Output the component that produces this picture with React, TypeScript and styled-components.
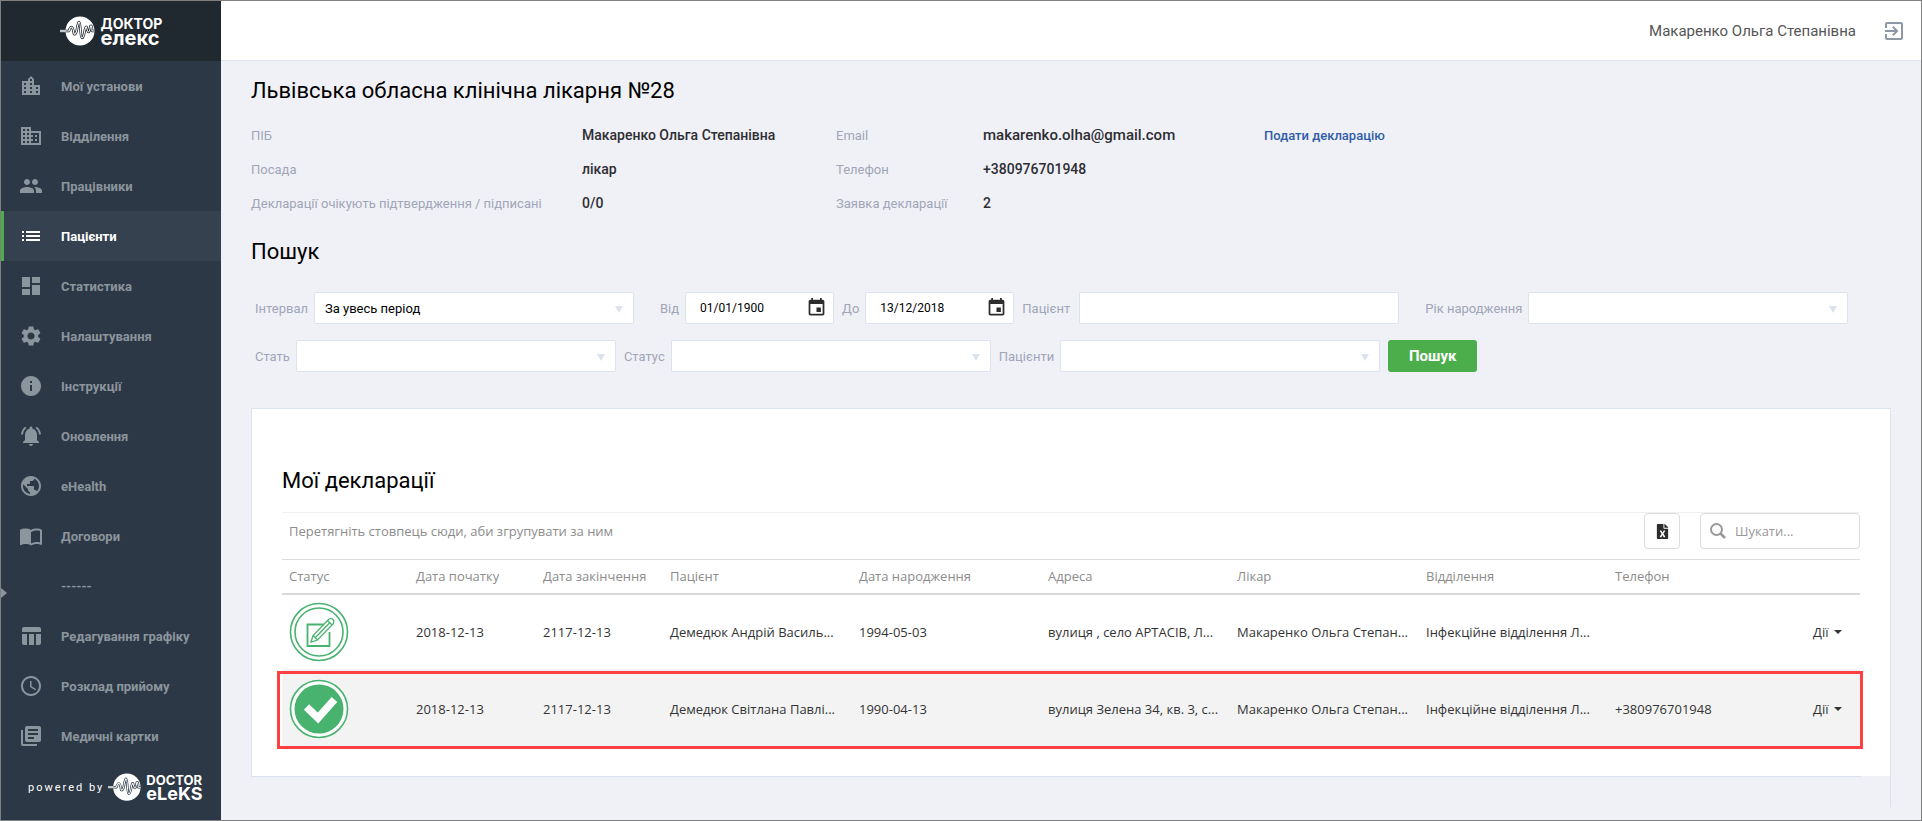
import React from "react";
import styled, { createGlobalStyle } from "styled-components";
import {
  MdLocationCity, MdBusiness, MdPeople, MdList, MdDashboard, MdSettings, MdInfo,
  MdNotificationsActive, MdPublic, MdImportContacts, MdTableChart, MdAccessTime,
  MdLibraryBooks, MdExitToApp, MdEvent,
} from "react-icons/md";
import { FaFileExcel } from "react-icons/fa";

const Global = createGlobalStyle`
  *, *::before, *::after { box-sizing: border-box; }
  body { margin: 0; font-family: Roboto, "Liberation Sans", sans-serif; font-size: 14px; color: #333; }
  h1, h2, ul { margin: 0; padding: 0; font-weight: 400; }
  input, select, button { font-family: inherit; }
`;

const Page = styled.div`
  display: flex;
  min-height: 100vh;
  border: 1px solid #808080;
  background: #f0f1f6;
`;

const Sidebar = styled.aside`
  width: 220px;
  flex: none;
  display: flex;
  flex-direction: column;
  background: #2d3846;
`;

const Brand = styled.a`
  height: 60px;
  display: flex;
  align-items: center;
  justify-content: center;
  gap: 5px;
  background: #202830;
  color: #fff;
  text-decoration: none;
`;

const BrandName = styled.span`
  display: flex;
  flex-direction: column;
  font-family: Inter, Roboto, sans-serif;
  font-weight: 700;
`;

const BrandTop = styled.span<{ $small?: boolean }>`
  font-size: ${(p) => (p.$small ? 13 : 14)}px;
  line-height: 14px;
`;

const BrandBottom = styled.span<{ $small?: boolean }>`
  font-size: ${(p) => (p.$small ? 18 : 20)}px;
  line-height: 14px;
`;

const Menu = styled.ul`
  list-style: none;
`;

const MenuLink = styled.a<{ $active?: boolean }>`
  position: relative;
  display: flex;
  align-items: center;
  gap: 18px;
  height: 50px;
  padding-left: 15px;
  border-left: 3px solid ${(p) => (p.$active ? "#4bae4b" : "transparent")};
  background: ${(p) => (p.$active ? "#36414f" : "transparent")};
  color: ${(p) => (p.$active ? "#fff" : "#8b959d")};
  font-size: 13px;
  font-weight: 700;
  text-decoration: none;

  svg { width: 24px; height: 24px; flex: none; }
`;

const IconSlot = styled.span`
  width: 24px;
`;

const Marker = styled.span`
  position: absolute;
  left: -3px;
  top: 27px;
  width: 6px;
  height: 10px;
  background: #8b959d;
  clip-path: polygon(0 0, 100% 50%, 0 100%);
`;

const Powered = styled.a`
  display: flex;
  align-items: center;
  gap: 4px;
  height: 52px;
  padding-left: 27px;
  color: #fff;
  text-decoration: none;
`;

const PoweredText = styled.span`
  font-size: 11px;
  letter-spacing: 2px;
`;

const Content = styled.div`
  flex: 1;
  min-width: 0;
  display: flex;
  flex-direction: column;
`;

const TopBar = styled.header`
  display: flex;
  align-items: center;
  justify-content: flex-end;
  gap: 26px;
  height: 60px;
  padding: 0 15px;
  background: #fff;
  border-bottom: 1px solid #dde3ee;
  color: #555;
  font-size: 15px;
`;

const IconButton = styled.button`
  display: flex;
  padding: 0;
  border: 0;
  background: none;
  color: #8d98a6;
`;

const Main = styled.main`
  padding: 15px 30px 0;
`;

const Title = styled.h1`
  font-size: 22px;
  line-height: 30px;
  color: #000;
`;

const Details = styled.div`
  display: grid;
  grid-template-columns: 331px 254px 147px 281px auto;
  grid-auto-rows: 34px;
  align-items: center;
  padding: 12px 0 17px;
  justify-content: start;
`;

const Term = styled.span`
  font-size: 13px;
  color: #a0a5b8;
`;

const Value = styled.span<{ $large?: boolean }>`
  font-size: ${(p) => (p.$large ? 15 : 14)}px;
  font-weight: 500;
  color: #2d2d33;
`;

const ActionLink = styled.a`
  font-size: 13px;
  font-weight: 500;
  color: #2f5ca8;
  text-decoration: none;
`;

const SectionTitle = styled.h2`
  font-size: 22px;
  line-height: 30px;
  color: #000;
`;

const SearchForm = styled.form`
  display: flex;
  flex-direction: column;
  gap: 16px;
  padding: 25px 4px 0;
`;

const FormRow = styled.div`
  display: flex;
  align-items: center;
  gap: 8px;
`;

const Field = styled.label<{ $gapAfter?: number; $loose?: boolean }>`
  display: flex;
  align-items: center;
  gap: ${(p) => (p.$loose ? 9 : 6)}px;
  margin-right: ${(p) => p.$gapAfter ?? 0}px;
  font-size: 13px;
  color: #a0a5b8;
`;

const control = `
  height: 32px;
  border: 1px solid #dde3ee;
  border-radius: 2px;
  background-color: #fff;
  color: #000;
`;

const Select = styled.select`
  ${control}
  width: 320px;
  padding: 0 10px;
  font-size: 13px;
  appearance: none;
`;

const SelectBox = styled.span`
  position: relative;
  display: flex;

  &::after {
    content: "";
    position: absolute;
    right: 11px;
    top: 14px;
    border: 4px solid transparent;
    border-top: 7px solid #dde3ee;
    border-bottom: 0;
  }
`;

const TextInput = styled.input`
  ${control}
  width: 320px;
  padding: 0 10px;
  font-size: 13px;
`;

const DateBox = styled.span`
  position: relative;
  display: flex;

  svg {
    position: absolute;
    right: 7px;
    top: 5px;
    width: 21px;
    height: 21px;
    color: #2d2d2d;
  }
`;

const DateInput = styled.input`
  ${control}
  width: 149px;
  padding: 0 14px;
  font-size: 12px;
`;

const SubmitButton = styled.button`
  width: 89px;
  height: 32px;
  border: 0;
  border-radius: 3px;
  background: #4bae4b;
  color: #fff;
  font-size: 15px;
  font-weight: 700;
`;

const Panel = styled.section`
  margin-top: 36px;
  padding-bottom: 30px;
  border-top: 1px solid #dde3ee;
  border-right: 1px solid #dde3ee;
`;

const PanelBody = styled.div`
  padding: 57px 30px 27px;
  background: #fff;
  border-left: 1px solid #dde3ee;
`;

const PanelEdge = styled.div`
  height: 1px;
  margin-right: 29px;
  background: #dde3ee;
`;

const GridTools = styled.div`
  display: flex;
  align-items: flex-start;
  justify-content: space-between;
  height: 47px;
  margin-top: 16px;
  border-top: 1px solid #f0f0f0;
  font-family: "Open Sans", "Noto Sans", sans-serif;
  font-size: 13px;
  color: #8c8c8c;
`;

const GroupHint = styled.span`
  padding: 0 7px;
  line-height: 37px;
`;

const ToolGroup = styled.div`
  display: flex;
  gap: 20px;
`;

const ExportButton = styled.button`
  display: flex;
  align-items: center;
  justify-content: center;
  width: 36px;
  height: 36px;
  padding: 0;
  border: 1px solid #ddd;
  border-radius: 4px;
  background: #fff;
  color: #2d2d2d;
`;

const SearchBox = styled.label`
  display: flex;
  align-items: center;
  gap: 9px;
  width: 160px;
  height: 36px;
  padding: 0 9px;
  border: 1px solid #ddd;
  border-radius: 4px;
  background: #fff;
  color: #999;
`;

const SearchInput = styled.input`
  min-width: 0;
  flex: 1;
  padding: 0;
  border: 0;
  outline: 0;
  background: none;
  font-size: 13px;

  &::placeholder { color: #999; }
`;

const Table = styled.table`
  width: 100%;
  table-layout: fixed;
  border-collapse: separate;
  border-spacing: 0;
  font-family: "Open Sans", "Noto Sans", sans-serif;
  font-size: 13px;
`;

const Col = styled.col<{ $w?: number }>`
  ${(p) => (p.$w ? `width: ${p.$w}px;` : "")}
`;

const HeadCell = styled.th`
  height: 36px;
  padding: 0 7px 2px;
  border-top: 1px solid #ddd;
  border-bottom: 2px solid #d9d9d9;
  color: #8c8c8c;
  font-weight: 400;
  text-align: left;
`;

const Row = styled.tr<{ $selected?: boolean }>`
  position: relative;
  height: ${(p) => (p.$selected ? 80 : 74)}px;
  background: ${(p) => (p.$selected ? "#f3f3f3" : "#fff")};

  td:last-child::after {
    content: "";
    display: ${(p) => (p.$selected ? "block" : "none")};
    position: absolute;
    inset: 2px -3px 0 -5px;
    border: 3px solid #fe4042;
    pointer-events: none;
  }
`;

const Cell = styled.td`
  padding: 0 7px;
  overflow: hidden;
  white-space: nowrap;
  text-overflow: ellipsis;
  vertical-align: middle;

  svg { display: block; }
`;

const MenuButton = styled.button`
  display: flex;
  align-items: center;
  gap: 6px;
  padding: 0 0 0 9px;
  border: 0;
  background: none;
  color: #333;
  font-size: 13px;

  &::after {
    content: "";
    border: 4px solid transparent;
    border-top-color: #333;
    border-bottom: 0;
  }
`;

const wave =
  "M6 15h3q1-4 2.500-4t2.500 7q2 1 3-5t2-7q1 0 1.500 8t1.500 8q1.500 0 2.500-6t2-5q1 5 2 5t2-6q1.500-1 1.500 5h2.500";

const LogoMark = ({ line, width = 36 }: { line: string; width?: number }) => (
  <svg width={width} viewBox="0 0 36 30" aria-hidden="true">
    <circle cx="20" cy="15" r="14.5" fill="#fff" />
    <path d="M0 15h8" stroke="#c4c8cc" strokeWidth="2.4" />
    <path d={wave} fill="none" stroke={line} strokeWidth="2.6" strokeLinejoin="round" />
    <path d={wave} fill="none" stroke="#fff" strokeWidth="1.1" strokeLinejoin="round" />
  </svg>
);

const EditStatus = () => (
  <svg width="60" height="60" viewBox="0 0 60 60" fill="none" stroke="#48b26f" role="img" aria-label="Чернетка">
    <circle cx="30" cy="30" r="28.5" strokeWidth="1.6" />
    <circle cx="30" cy="30" r="24" strokeWidth="1.6" />
    <path d="M35 22.500H18.500V44h22V30" strokeWidth="1.8" />
    <path d="M22 40l2-6.500 16-16.500q2.500-1 4 0.500t0.500 4L28.500 38zM24 33.500l4.500 4.500M26.500 35.500l14-14.500M38.500 18.500l4.500 4.500" strokeWidth="1.3" />
  </svg>
);

const DoneStatus = () => (
  <svg width="60" height="60" viewBox="0 0 60 60" role="img" aria-label="Підписано">
    <circle cx="30" cy="30" r="28.500" fill="#fff" stroke="#48b26f" strokeWidth="1.6" />
    <circle cx="30" cy="30" r="24.500" fill="#48b26f" />
    <path d="M17.500 28l11.500 11L45.500 20.500" fill="none" stroke="#fff" strokeWidth="7.500" />
  </svg>
);

const SearchGlyph = () => (
  <svg width="16" height="16" viewBox="0 0 16 16" fill="none" stroke="#999" aria-hidden="true">
    <circle cx="6.500" cy="6.500" r="5.500" strokeWidth="2" />
    <path d="M10.500 10.500l4.500 4.500" strokeWidth="2.500" />
  </svg>
);

const menu = [
  { label: "Мої установи", icon: MdLocationCity },
  { label: "Відділення", icon: MdBusiness },
  { label: "Працівники", icon: MdPeople },
  { label: "Пацієнти", icon: MdList, active: true },
  { label: "Статистика", icon: MdDashboard },
  { label: "Налаштування", icon: MdSettings },
  { label: "Інструкції", icon: MdInfo },
  { label: "Оновлення", icon: MdNotificationsActive },
  { label: "eHealth", icon: MdPublic },
  { label: "Договори", icon: MdImportContacts },
  { label: "------" },
  { label: "Редагування графіку", icon: MdTableChart },
  { label: "Розклад прийому", icon: MdAccessTime },
  { label: "Медичні картки", icon: MdLibraryBooks },
];

const columns = [
  "Статус", "Дата початку", "Дата закінчення", "Пацієнт", "Дата народження",
  "Адреса", "Лікар", "Відділення", "Телефон", "",
];

const rows = [
  {
    status: <EditStatus />,
    cells: ["2018-12-13", "2117-12-13", "Демедюк Андрій Василь...", "1994-05-03",
      "вулиця , село АРТАСІВ, Л...", "Макаренко Ольга Степан...", "Інфекційне відділення Л...", ""],
  },
  {
    status: <DoneStatus />,
    selected: true,
    cells: ["2018-12-13", "2117-12-13", "Демедюк Світлана Павлі...", "1990-04-13",
      "вулиця Зелена 34, кв. 3, с...", "Макаренко Ольга Степан...", "Інфекційне відділення Л...", "+380976701948"],
  },
];

export default function App() {
  return (
    <>
      <Global />
      <Page>
        <Sidebar>
          <Brand href="#">
            <LogoMark line="#202830" />
            <BrandName>
              <BrandTop>ДОКТОР</BrandTop>
              <BrandBottom>елекс</BrandBottom>
            </BrandName>
          </Brand>
          <nav>
            <Menu>
              {menu.map(({ label, icon: Icon, active }) => (
                <li key={label}>
                  <MenuLink href="#" $active={active}>
                    {Icon ? <Icon /> : <><Marker /><IconSlot /></>}
                    {label}
                  </MenuLink>
                </li>
              ))}
            </Menu>
          </nav>
          <Powered href="#">
            <PoweredText>powered by</PoweredText>
            <LogoMark line="#2d3846" width={34} />
            <BrandName>
              <BrandTop $small>DOCTOR</BrandTop>
              <BrandBottom $small>eLeKS</BrandBottom>
            </BrandName>
          </Powered>
        </Sidebar>
        <Content>
          <TopBar>
            Макаренко Ольга Степанівна
            <IconButton type="button" aria-label="Вийти"><MdExitToApp size={24} /></IconButton>
          </TopBar>
          <Main>
            <Title>Львівська обласна клінічна лікарня №28</Title>
            <Details>
              <Term>ПІБ</Term><Value>Макаренко Ольга Степанівна</Value>
              <Term>Email</Term><Value $large>makarenko.olha@gmail.com</Value>
              <ActionLink href="#">Подати декларацію</ActionLink>
              <Term>Посада</Term><Value>лікар</Value>
              <Term>Телефон</Term><Value>+380976701948</Value><span />
              <Term>Декларації очікують підтвердження / підписані</Term><Value>0/0</Value>
              <Term>Заявка декларації</Term><Value>2</Value>
            </Details>
            <SectionTitle>Пошук</SectionTitle>
            <SearchForm onSubmit={(e) => e.preventDefault()}>
              <FormRow>
                <Field $gapAfter={18}>
                  Інтервал
                  <SelectBox><Select><option>За увесь період</option></Select></SelectBox>
                </Field>
                <Field>
                  Від
                  <DateBox><DateInput defaultValue="01/01/1900" /><MdEvent /></DateBox>
                </Field>
                <Field>
                  До
                  <DateBox><DateInput defaultValue="13/12/2018" /><MdEvent /></DateBox>
                </Field>
                <Field $gapAfter={18} $loose>Пацієнт<TextInput /></Field>
                <Field>
                  Рік народження
                  <SelectBox><Select><option></option></Select></SelectBox>
                </Field>
              </FormRow>
              <FormRow>
                {["Стать", "Статус", "Пацієнти"].map((label) => (
                  <Field key={label}>
                    {label}
                    <SelectBox><Select><option></option></Select></SelectBox>
                  </Field>
                ))}
                <SubmitButton type="submit">Пошук</SubmitButton>
              </FormRow>
            </SearchForm>
            <Panel>
              <PanelBody>
                <SectionTitle>Мої декларації</SectionTitle>
                <GridTools>
                  <GroupHint>Перетягніть стовпець сюди, аби згрупувати за ним</GroupHint>
                  <ToolGroup>
                    <ExportButton type="button" aria-label="Експорт"><FaFileExcel size={15} /></ExportButton>
                    <SearchBox>
                      <SearchGlyph />
                      <SearchInput placeholder="Шукати..." aria-label="Шукати" />
                    </SearchBox>
                  </ToolGroup>
                </GridTools>
                <Table>
                  <colgroup>
                    <Col $w={127} /><Col $w={127} /><Col $w={127} />
                    <Col /><Col /><Col /><Col /><Col /><Col />
                    <Col $w={63} />
                  </colgroup>
                  <thead>
                    <tr>{columns.map((c) => <HeadCell key={c}>{c}</HeadCell>)}</tr>
                  </thead>
                  <tbody>
                    {rows.map((r, i) => (
                      <Row key={i} $selected={r.selected}>
                        <Cell>{r.status}</Cell>
                        {r.cells.map((c, j) => <Cell key={j}>{c}</Cell>)}
                        <Cell><MenuButton type="button">Дії</MenuButton></Cell>
                      </Row>
                    ))}
                  </tbody>
                </Table>
              </PanelBody>
              <PanelEdge />
            </Panel>
          </Main>
        </Content>
      </Page>
    </>
  );
}
